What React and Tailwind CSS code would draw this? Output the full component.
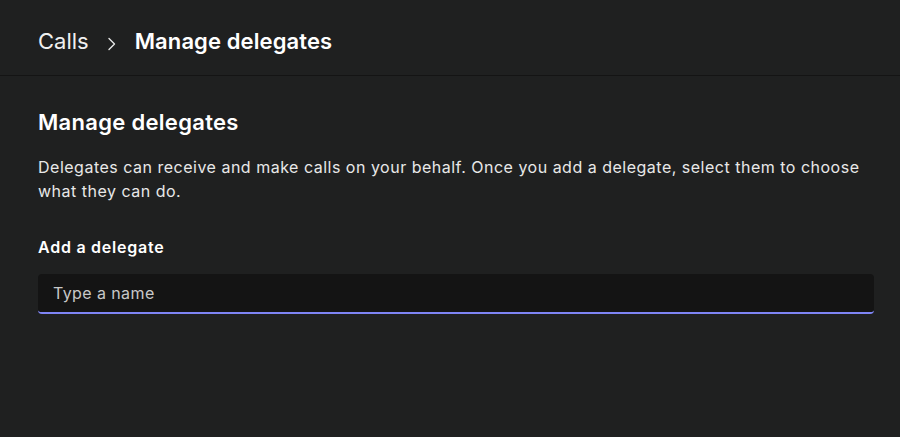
import React from "react";

const Chevron = () => (
  <svg width="10" height="14" viewBox="0 0 10 14" fill="none" className="mx-[18px] mt-[5px]">
    <path d="M2 1.5 L7.5 7 L2 12.5" stroke="#e6e6e6" strokeWidth="1.4" strokeLinecap="round" strokeLinejoin="round" />
  </svg>
);

const App = () => {
  return (
    <div className="w-[900px] h-[437px] bg-[#1f2020] text-white font-['Inter',sans-serif] overflow-hidden">
      <header className="h-[76px] border-b border-[#141414] flex items-center pl-[38px] pt-[7px]">
        <span className="text-[22px] font-normal tracking-[0px] text-[#f0f0f0]">Calls</span>
        <Chevron />
        <span className="text-[22px] font-semibold tracking-[0.1px]">Manage delegates</span>
      </header>
      <main className="px-[38px] pt-[32px]">
        <h1 className="text-[22px] font-semibold leading-[28px] tracking-[0.3px]">Manage delegates</h1>
        <p className="mt-[19px] text-[16px] leading-[24px] tracking-[0.5px] text-[#e8e8e8]">
          Delegates can receive and make calls on your behalf. Once you add a delegate, select them to choose what they can do.
        </p>
        <h2 className="mt-[33px] text-[16px] font-semibold leading-[22px] tracking-[0.75px]">Add a delegate</h2>
        <div className="mt-[16px] w-[836px] h-[40px] bg-[#141414] rounded-[4px] border-b-2 border-[#7f85f5] flex items-center px-[15px]">
          <input
            className="w-full bg-transparent outline-none text-[16px] tracking-[0.4px] text-white placeholder:text-[#c8c8c8]"
            placeholder="Type a name"
          />
        </div>
      </main>
    </div>
  );
};

export default App;
